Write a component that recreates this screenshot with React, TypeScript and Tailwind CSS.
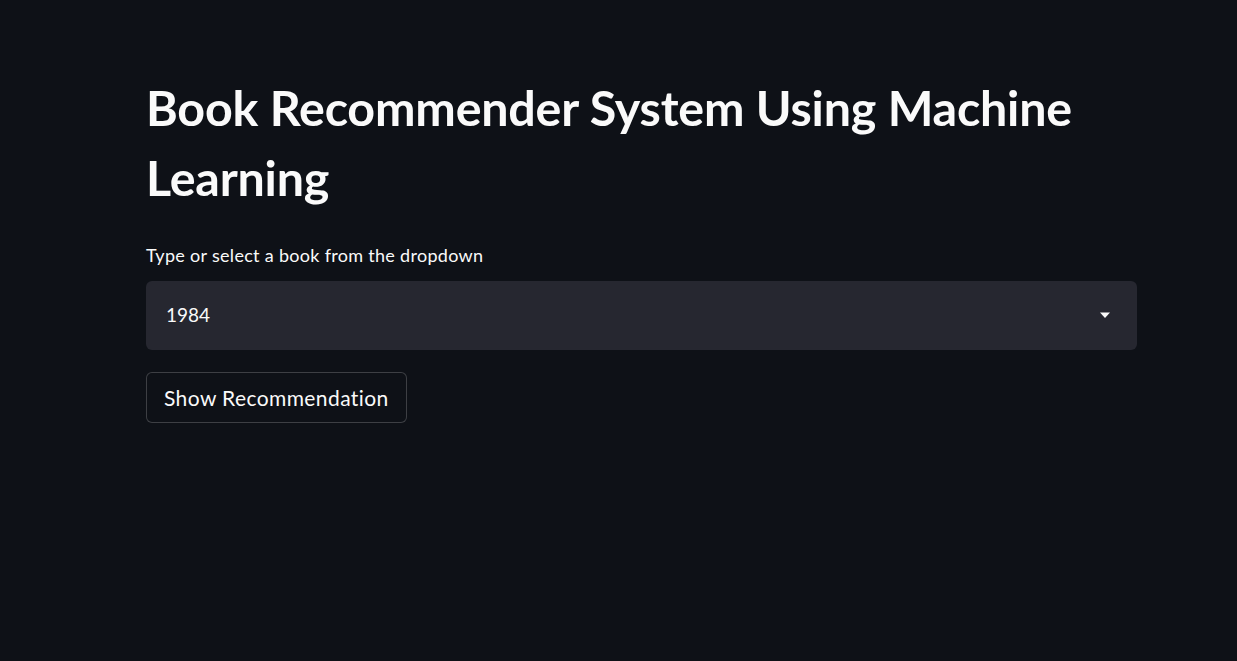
import React from "react";

export default function App() {
  return (
    <div
      className="min-h-[661px] w-full bg-[#0e1117] text-[#fafafa]"
      style={{ fontFamily: "Lato, 'Noto Sans', sans-serif" }}
    >
      <div className="pl-[146px] pt-[72px] w-[1137px]">
        <h1 className="text-[48.4px] font-bold leading-[70px] tracking-[-0.2px] pr-[20px]">
          Book Recommender System Using Machine Learning
        </h1>
        <div className="mt-[33px] text-[18px] leading-[20px] tracking-[0.3px]">
          Type or select a book from the dropdown
        </div>
        <div className="mt-[16px] h-[69px] rounded-[6px] bg-[#262730] flex items-center justify-between pl-[20px] pr-[26px]">
          <span className="text-[19px]">1984</span>
          <svg width="12" height="7" viewBox="0 0 12 7">
            <path d="M1 0.5 L11 0.5 L6 6 Z" fill="#fafafa" />
          </svg>
        </div>
        <button className="mt-[22px] h-[51px] px-[17px] rounded-[6px] border border-[rgba(250,250,250,0.2)] bg-[#0e1117] text-[21px] tracking-[0.4px] text-[#fafafa]">
          Show Recommendation
        </button>
      </div>
    </div>
  );
}
